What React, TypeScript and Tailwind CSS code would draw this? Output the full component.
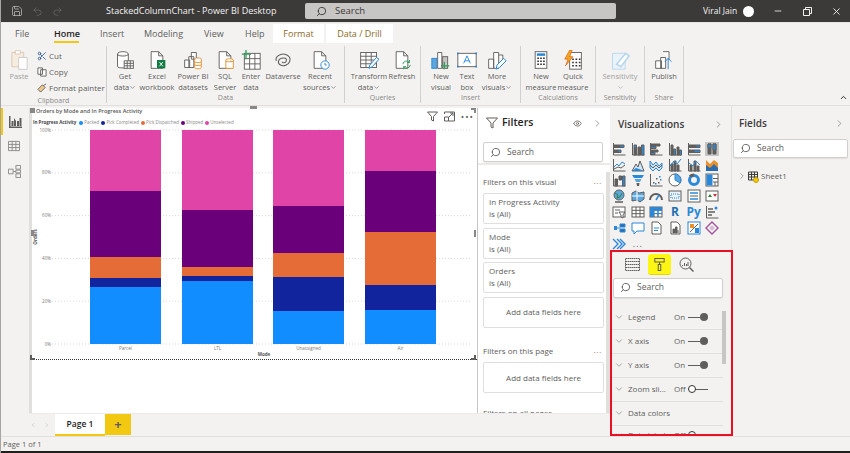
import { ChevronDown, ChevronRight, ChevronUp, Eye, Minus, Redo2, Save, Scissors, Search, Undo2, X } from "lucide-react";
import type { ReactNode } from "react";

const G = "#605e5c";
const B = "#2b88d8";
const O = "#e8912d";

const bars = [
  { label: "Parcel", x: 58, stops: [61, 66, 21, 9, 57] },
  { label: "LTL", x: 150, stops: [80, 57, 9, 5, 63] },
  { label: "Unassigned", x: 241, stops: [76, 47, 24, 34, 33] },
  { label: "Air", x: 333, stops: [41, 61, 53, 25, 34] },
];
const barColors = ["#e044a7", "#6b007b", "#e66c37", "#12239e", "#118dff"];

const legend = [
  ["Packed", "#118dff"],
  ["Pick Completed", "#12239e"],
  ["Pick Dispatched", "#e66c37"],
  ["Shipped", "#6b007b"],
  ["Unselected", "#e044a7"],
];

function Ico({ children, s = 20, vb = 24 }: { children: ReactNode; s?: number; vb?: number }) {
  return (
    <svg width={s} height={s} viewBox={`0 0 ${vb} ${vb}`} fill="none" stroke={G} strokeWidth="1.100" className="shrink-0">
      {children}
    </svg>
  );
}

const Doc = () => <path d="M5 2h9l5 5v15H5z M14 2v5h5" fill="#fff" />;
const Grid = ({ x, y, w = 12, h = 9, c = 3, r = 3 }: { x: number; y: number; w?: number; h?: number; c?: number; r?: number }) => (
  <g>
    <rect x={x} y={y} width={w} height={h} fill="#fff" />
    {Array.from({ length: c - 1 }).map((_, i) => (
      <path key={i} d={`M${x + ((i + 1) * w) / c} ${y}v${h}`} />
    ))}
    {Array.from({ length: r - 1 }).map((_, i) => (
      <path key={i} d={`M${x} ${y + ((i + 1) * h) / r}h${w}`} />
    ))}
  </g>
);

const ribbonIcons: Record<string, ReactNode> = {
  get: (
    <Ico>
      <path d="M3 5c0-4 13-4 13 0v15c0 2-13 2-13 0z M3 5c0 3 13 3 13 0" fill="#fff" />
      <Grid x={11} y={13} w={11} h={9} />
    </Ico>
  ),
  excel: (
    <Ico>
      <Doc />
      <rect x="12" y="12" width="10" height="10" fill="#107c41" stroke="none" />
      <path d="M15 14.500l4 5M19 14.500l-4 5" stroke="#fff" />
    </Ico>
  ),
  pbi: (
    <Ico>
      <path d="M2 12h6v9H2z M7 8h6v13H7z M10 3h6v8H10z" fill="#fff" />
      <path d="M14 11c0-2 8-2 8 0v10c0 2-8 2-8 0z M14 14c0 1.500 8 1.500 8 0M14 17.500c0 1.500 8 1.500 8 0" stroke={O} fill="#fff" />
    </Ico>
  ),
  sql: (
    <Ico>
      <Doc />
      <path d="M13 12c0-2 9-2 9 0v10h-9z M13 13c0 1.500 9 1.500 9 0" stroke={O} fill="#fff" />
    </Ico>
  ),
  enter: (
    <Ico>
      <Grid x={4} y={4} w={19} h={19} c={3} r={3} />
      <path d="M6 0v11M1 5h11" stroke="#2e9e5b" strokeWidth="1.600" />
    </Ico>
  ),
  dataverse: (
    <Ico>
      <path d="M4 13c-2-5 5-9 10-8s8 5 6 9-7 6-11 4-3-7 1-8 7 0 6 3-5 3-5 1" strokeWidth="1.300" />
    </Ico>
  ),
  recent: (
    <Ico>
      <Doc />
      <circle cx="18" cy="18" r="5" fill="#fff" stroke={B} />
      <path d="M18 15.500V18h2" stroke={B} />
    </Ico>
  ),
  transform: (
    <Ico>
      <Grid x={2} y={3} w={19} h={18} c={3} r={4} />
      <path d="M12 22l1-4 8-9 3 2-8 9z" stroke={B} fill="#fff" strokeWidth="1.200" />
    </Ico>
  ),
  refresh: (
    <Ico>
      <Doc />
      <path d="M13 17a4.500 4.500 0 0 1 8-2M22 18a4.500 4.500 0 0 1-8 2M21 12v3h-3M14 23v-3h3" stroke="#2e9e5b" />
    </Ico>
  ),
  newVisual: (
    <Ico>
      <rect x="1" y="10" width="6" height="12" fill="#5ba7e0" stroke={B} />
      <path d="M8 3h5v19H8z" fill="#fff" />
      <rect x="14" y="8" width="6" height="14" fill="#c8c6c4" />
      <path d="M16 14v9M12 19h10" stroke="#2e9e5b" strokeWidth="1.500" />
    </Ico>
  ),
  textBox: (
    <Ico>
      <rect x="1" y="4" width="22" height="16" fill="#fff" stroke={G} />
      <path d="M8 16l4-9 4 9M9.500 13h5" stroke={B} />
      <path d="M0 3h2v2H0zM22 3h2v2h-2zM0 19h2v2H0zM22 19h2v2h-2z" fill={B} stroke="none" />
    </Ico>
  ),
  more: (
    <Ico>
      <path d="M2 11h6v11H2z M8 3h6v19H8z M14 6h5v7" fill="#fff" />
      <path d="M11 23l1-5 8-8 3 3-8 8z" stroke={B} fill="#fff" strokeWidth="1.200" />
    </Ico>
  ),
  measure: (
    <Ico>
      <rect x="5" y="2" width="14" height="20" fill="#fff" />
      <rect x="7" y="4" width="10" height="3" fill={B} stroke="none" />
      <path d="M7.500 10h2M11 10h2M14.500 10h2M7.500 13.500h2M11 13.500h2M14.500 13.500h2M7.500 17h2M11 17h2M14.500 17h2" stroke="#323130" strokeWidth="1.800" />
    </Ico>
  ),
  quick: (
    <Ico>
      <rect x="8" y="3" width="14" height="20" fill="#fff" />
      <path d="M11 11h2M15 11h2M19 11h2M11 15h2M15 15h2M19 15h2M11 19h2M15 19h2M19 19h2" stroke="#323130" strokeWidth="1.800" />
      <path d="M8 0l-6 11h4l-3 8 9-11H8l3-8z" fill="#f2a81d" stroke="#d83b01" strokeWidth="0.600" />
    </Ico>
  ),
  sensitivity: (
    <Ico>
      <path d="M3 4h15v19H3z" fill="#eaf3fa" stroke="#b9d6ec" />
      <path d="M8 17l11-13 4 3-10 13z" fill="#fff" stroke="#b9d6ec" strokeWidth="2" />
    </Ico>
  ),
  publish: (
    <Ico>
      <path d="M2 13h7v9H2z M8 9h6v13H8z M11 2h7v10" fill="#fff" />
      <path d="M17 23V10M13 14l4-4 4 4" stroke={B} />
    </Ico>
  ),
};

function RibbonBtn({ w, icon, lines, caret, muted }: { w: number; icon: string; lines: string[]; caret?: boolean; muted?: boolean }) {
  return (
    <div style={{ width: w }} className="flex flex-col items-center shrink-0">
      <div className="h-[22px] flex items-center">{ribbonIcons[icon]}</div>
      <div className={`text-[7.500px] leading-[11px] text-center whitespace-nowrap ${muted ? "text-[#a19f9d]" : "text-[#605e5c]"}`}>
        {lines.map((l, i) => (
          <div key={i} className="flex items-center justify-center h-[11px]">
            {l}
            {caret && i === lines.length - 1 && <ChevronDown size={7} strokeWidth={2} />}
          </div>
        ))}
      </div>
    </div>
  );
}

function Group({ w, label, inner = "justify-center", children }: { w: number; label: string; inner?: string; children: ReactNode }) {
  return (
    <div style={{ width: w }} className="h-full shrink-0 flex flex-col border-r border-[#d2d0ce]">
      <div className={`flex-1 flex pt-[3px] ${inner}`}>{children}</div>
      <div className="text-center text-[7px] leading-[9px] text-[#8a8886] pb-[1px]">{label}</div>
    </div>
  );
}

function VizIcon({ i }: { i: number }) {
  const g = <path d="M1.500 1v12h12" stroke={G} />;
  const icons: ReactNode[] = [
    <>{g}<path d="M2 3h6v2.500H2z" fill={G} /><path d="M8 3h4v2.500H8z" fill={B} /><path d="M2 8h4v2.500H2z" fill={G} /><path d="M6 8h3v2.500H6z" fill={B} /></>,
    <>{g}<path d="M3 6h2.500v7H3z" fill={G} /><path d="M3 3h2.500v3H3z" fill={B} /><path d="M7 5h2.500v8H7z" fill={G} /><path d="M10.500 3h2.500v10h-2.500z" fill={B} /></>,
    <>{g}<path d="M2 2h9v2H2z" fill={G} /><path d="M2 4.500h5v2H2z" fill={B} /><path d="M2 8h7v2H2z" fill={G} /><path d="M2 10.500h4v2H2z" fill={B} /></>,
    <>{g}<path d="M3 3h2v10H3z" fill={G} /><path d="M5.500 7h2v6h-2z" fill={B} /><path d="M9 5h2v8H9z" fill={G} /><path d="M11.500 8h2v5h-2z" fill={B} /></>,
    <>{g}<path d="M2 3h7v2.500H2z" fill={G} /><path d="M9 3h4v2.500H9z" fill={B} /><path d="M2 8h5v2.500H2z" fill={G} /><path d="M7 8h6v2.500H7z" fill={B} /></>,
    <><rect x="0" y="0" width="14" height="14" fill="#c8c6c4" stroke="none" /><path d="M3 2h3v10H3z" fill={G} /><path d="M3 2h3v4H3z" fill={B} /><path d="M8 2h3v10H8z" fill={G} /><path d="M8 2h3v6H8z" fill={B} /></>,
    <>{g}<path d="M2 9l3-3 2 2 3-4 3 2" stroke={B} /><path d="M2 11l4-2 3 1 4-3" stroke={G} /></>,
    <><path d="M1 13l4-7 2 3 2-6 4 10z" fill="#cfe4f5" stroke={G} /><path d="M1 13l4-3 3 1 5 2z" fill={B} stroke="none" /></>,
    <><path d="M1 3l3 4 3-3 3 4 3-3v5l-3 3-3-3-3 3-3-3z" fill="#cfe4f5" stroke={B} /><path d="M1 7l3 3 3-3 3 3 3-3" stroke={G} /></>,
    <>{g}<path d="M3 6h2v7H3zM6 3h2v10H6zM9 7h2v6H9z" fill={G} /><path d="M2 8l4-5 3 3 4-5" stroke={B} /></>,
    <>{g}<path d="M3 7h2v6H3zM7 3h2v10H7zM10 8h2v5h-2z" fill={G} /><path d="M2 5l4 3 3-5 4 4" stroke={B} /></>,
    <><path d="M1 2l4 4 4-4 4 3v7l-4-3-4 3-4-3z" fill={O} stroke="none" /><path d="M1 7l4 3 4-4 4 4v3H1z" fill="#2b6cb0" stroke="none" /></>,
    <>{g}<path d="M3 6h2.500v7H3zM7 3h2.500v4H7z" fill={G} /><path d="M10.500 3h2.500v10h-2.500z" fill={B} /></>,
    <><path d="M1 2h12l-2 3H3z" fill={B} stroke="none" /><path d="M3.500 6h7l-1.500 3H5z" fill="#5ba7e0" stroke="none" /><path d="M5.500 10h3l-.5 3H6z" fill={G} stroke="none" /></>,
    <>{g}<path d="M4 9h1.500v1.500H4zM7 5h1.500v1.500H7zM9 9h1.500v1.500H9z" fill={G} stroke="none" /><path d="M6 10h1.500v1.500H6zM10 3h1.500v1.500H10zM11 6h1.500v1.500H11z" fill={B} stroke="none" /></>,
    <><circle cx="7" cy="7" r="6" fill="#fff" stroke={G} /><path d="M7 7V1a6 6 0 0 1 5 9z" fill="#5ba7e0" stroke={B} /></>,
    <><circle cx="7" cy="7" r="4.500" stroke={B} strokeWidth="3" /><path d="M3 3.500A5 5 0 0 1 7 2" stroke={G} strokeWidth="3" /></>,
    <><rect x="1" y="1" width="12" height="12" fill="#fff" stroke={G} /><rect x="1.500" y="1.500" width="6" height="11" fill={B} stroke="none" /><path d="M8 5.500h5M8 9h5M10 9v4" stroke={G} /></>,
    <><circle cx="7" cy="6" r="5" fill="#5ba7e0" stroke={G} /><path d="M3 4l3 2-1 3 3-1 2-4" stroke="#2e7d32" /><path d="M3 13h8" stroke={G} strokeWidth="1.500" /></>,
    <><path d="M1 4l4-2 3 2 5-1v7l-4 3-3-2-5 1z" fill="#5ba7e0" stroke={G} /><path d="M6 2v10M1 7h12" stroke="#fff" /></>,
    <><path d="M1 11a6 6 0 0 1 12 0" stroke={G} strokeWidth="2" /><path d="M7 11l3-5" stroke={B} strokeWidth="1.500" /></>,
    <><rect x="1" y="2" width="12" height="10" fill="#eaf3fa" stroke={G} /><path d="M3 5h8v4H3z" stroke={B} strokeDasharray="1 1" /></>,
    <><rect x="1" y="1" width="12" height="12" fill="#fff" stroke={G} /><path d="M3 4h8" stroke={B} strokeWidth="1.500" /><path d="M3 7h8" stroke={G} /><path d="M3 10h8" stroke={B} strokeWidth="1.500" /></>,
    <><rect x="1" y="2" width="12" height="10" fill="#fff" stroke={G} /><path d="M3 8l2-3 2 3z" fill="#2e7d32" stroke="none" /><path d="M8 5l2 3 2-3z" fill="#d13438" stroke="none" /></>,
    <><rect x="1" y="2" width="12" height="10" fill="#fff" stroke={G} /><path d="M3 5h5M3 8h3" /><path d="M7 7h6l-2 3v3l-2-1v-2z" fill="#fff" stroke={G} /></>,
    <Grid x={1} y={2} w={12} h={10} c={3} r={3} />,
    <><Grid x={1} y={2} w={12} h={10} c={3} r={3} /><path d="M1 2h12v3H1zM1 2h4v10H1z" fill={B} stroke="none" /><path d="M5 5h8M5 8.500h8M9 5v7" stroke={B} /></>,
    null,
    null,
    <><path d="M1.500 1v12h12" stroke={G} /><path d="M3 4h5M3 7h7M3 10h4" stroke={G} strokeWidth="1.300" /><circle cx="11" cy="3" r="1.500" fill={B} stroke="none" /></>,
    <><path d="M2 5h3v4H2z" fill={B} stroke="none" /><path d="M5 7h3M8 3h5v3H8zM8 8h5v3H8z" stroke={B} fill="#2b6cb0" /></>,
    <path d="M1 2h12v8H6l-3 3v-3H1z" fill="#fff" stroke={B} />,
    <><path d="M3 1h6l3 3v9H3z" fill="#fff" stroke={G} /><path d="M5 7h5M5 9.500h4" stroke={B} /></>,
    <><path d="M3 1h6l3 3v9H3z" fill="#fff" stroke={G} /><path d="M5 12V8h1.500v4zM7.500 12V6H9v6zM10 12V9" fill={G} /></>,
    <><rect x="1" y="1" width="12" height="12" fill="#fff" stroke={B} /><path d="M3 3h4v4H3z" fill={O} stroke="none" /><path d="M8 7h4v5H8z" fill={B} stroke="none" /><path d="M3 11l8-8" stroke={G} /></>,
    <><path d="M7 1l6 6-6 6-6-6z" fill="#fff" stroke="#a4579c" strokeWidth="1.500" /><path d="M7 4l3 3-3 3-3-3z" fill="#d9b8d6" stroke="none" /></>,
    <path d="M1 2l5 5-5 5M5 2l5 5-5 5M8 2l5 5-5 5" stroke={B} strokeWidth="1.400" />,
  ];
  if (i === 27) return <span className="text-[12px] font-bold text-[#1f6fb5] leading-[14px]">R</span>;
  if (i === 28) return <span className="text-[12px] font-bold text-[#2b88d8] leading-[14px]">Py</span>;
  return (
    <svg width="14" height="14" viewBox="0 0 14 14" fill="none" stroke={G} strokeWidth="1">
      {icons[i]}
    </svg>
  );
}

function SearchBox({ className }: { className: string }) {
  return (
    <div className={`flex items-center bg-white border border-[#d2d0ce] rounded-[2px] shadow-[0_1px_1px_rgba(0,0,0,0.08)] ${className}`}>
      <Search size={11} className="text-[#605e5c] -scale-x-100 ml-[6px] mr-[6px]" />
      <span className="text-[8.500px] text-[#605e5c]">Search</span>
    </div>
  );
}

function FilterCard({ name }: { name: string }) {
  return (
    <div className="border border-[#e1dfdd] rounded-[2px] h-[31px] mb-[3.500px] pl-[5px] text-[8px] leading-[12px] text-[#605e5c] pt-[2px]">
      <div>{name}</div>
      <div>is (All)</div>
    </div>
  );
}

function AddFields() {
  return <div className="border border-[#e1dfdd] rounded-[2px] h-[31px] flex items-center justify-center text-[8px] text-[#605e5c]">Add data fields here</div>;
}

function FormatRow({ name, value, on }: { name: string; value?: string; on?: boolean }) {
  return (
    <div className="flex items-center h-[24px] border-b border-[#e1dfdd] text-[8px] text-[#605e5c] pl-[3px]">
      <ChevronDown size={10} strokeWidth={1.2} className="mr-[4px]" />
      <span className="w-[46px] whitespace-nowrap">{name}</span>
      {value && <span className="w-[14px]">{value}</span>}
      {value && (
        <span className="relative w-[20px] h-[1px] bg-[#605e5c]">
          <span className={on ? "absolute right-0 -top-[3.500px] w-[8px] h-[8px] rounded-full bg-[#605e5c]" : "absolute left-0 -top-[3.500px] w-[8px] h-[8px] rounded-full bg-white border border-[#323130]"} />
        </span>
      )}
    </div>
  );
}

export default function App() {
  return (
    <div className="relative w-[850px] h-[453px] overflow-hidden flex flex-col bg-[#f3f2f1] border-l border-[#a8a6a4] font-['Open_Sans',sans-serif]">
      {/* title bar */}
      <div className="h-[22px] bg-[#3b3a39] flex items-center text-[#f3f2f1] shrink-0">
        <Save size={12} strokeWidth={1.3} className="ml-[10px] text-[#d2d0ce]" />
        <Undo2 size={11} strokeWidth={1.2} className="ml-[9px] text-[#797775]" />
        <Redo2 size={11} strokeWidth={1.2} className="ml-[9px] text-[#797775]" />
        <span className="ml-[43px] w-[199px] text-[9px] whitespace-nowrap">StackedColumnChart - Power BI Desktop</span>
        <div className="w-[311px] h-[16px] rounded-[2px] bg-[#c8c6c4] flex items-center text-[#3b3a39]">
          <Search size={11} className="ml-[11px] mr-[8px] -scale-x-100" />
          <span className="text-[9.500px]">Search</span>
        </div>
        <span className="ml-[87px] text-[8.500px]">Viral Jain</span>
        <span className="ml-[6px] w-[11px] h-[11px] rounded-full bg-white" />
        <Minus size={10} className="ml-[19px]" />
        <svg width="9" height="9" viewBox="0 0 9 9" fill="none" stroke="currentColor" className="ml-[20px]">
          <path d="M.5 2.500h6v6h-6zM2.500 2.500v-2h6v6h-2" />
        </svg>
        <X size={11} className="ml-[19px]" />
      </div>

      {/* tabs */}
      <div className="h-[21px] shrink-0 flex items-end text-[9px] text-[#605e5c] border-t border-[#e8e6e4] whitespace-nowrap">
        {[
          ["File", "ml-[14px] w-[12px]"],
          ["Home", "ml-[27px] w-[25px] font-semibold text-[#252423] border-b-2 border-[#f2c811]"],
          ["Insert", "ml-[21px] w-[23px]"],
          ["Modeling", "ml-[21px] w-[39px]"],
          ["View", "ml-[21px] w-[19px]"],
          ["Help", "ml-[22px] w-[18px]"],
        ].map(([t, c]) => (
          <span key={t} className={`h-[19px] leading-[19px] ${c}`}>{t}</span>
        ))}
        <span className="ml-[10px] w-[51px] h-[19px] leading-[19px] text-center bg-white text-[#8a6a1f]">Format</span>
        <span className="ml-[2px] w-[67px] h-[19px] leading-[19px] text-center bg-white text-[#8a6a1f]">Data / Drill</span>
      </div>

      {/* ribbon */}
      <div className="relative h-[63px] shrink-0 flex pt-[3px] pb-[2px] border-b border-[#e1dfdd]">
        <Group w={106} label="Clipboard" inner="justify-start">
          <div className="w-[36px] flex flex-col items-center">
            <svg width="17" height="22" viewBox="0 0 20 26" fill="none" stroke="#d8c4ae">
              <path d="M1 4h14v17H1z" fill="#f7ece0" />
              <path d="M5 2h6v4H5z" fill="#fff" />
              <path d="M9 10h10v14H9z" fill="#fff" stroke="#c8c6c4" />
            </svg>
            <span className="text-[7.500px] leading-[11px] text-[#a19f9d]">Paste</span>
          </div>
          <div className="flex-1 flex flex-col text-[8px] text-[#605e5c] leading-[16px] -mt-[1px]">
            <div className="flex items-center gap-[2px]"><Scissors size={10} className="text-[#2b579a]" />Cut</div>
            <div className="flex items-center gap-[2px]">
              <svg width="10" height="10" viewBox="0 0 11 11" fill="none" stroke={G}><path d="M1 1h5v7H1zM4 3h6v7H4z" fill="#fff" /></svg>
              Copy
            </div>
            <div className="flex items-center gap-[2px] whitespace-nowrap">
              <svg width="10" height="10" viewBox="0 0 11 11" fill="none" stroke={G}><path d="M1 7l5-5 3 3-5 5z" fill="#f2c98c" /><path d="M7 3l3-2" /></svg>
              Format painter
            </div>
          </div>
        </Group>
        <Group w={238} label="Data" inner="justify-start pl-[1px]">
          <RibbonBtn w={34} icon="get" lines={["Get", "data"]} caret />
          <RibbonBtn w={30} icon="excel" lines={["Excel", "workbook"]} />
          <RibbonBtn w={42} icon="pbi" lines={["Power BI", "datasets"]} />
          <RibbonBtn w={22} icon="sql" lines={["SQL", "Server"]} />
          <RibbonBtn w={30} icon="enter" lines={["Enter", "data"]} />
          <RibbonBtn w={34} icon="dataverse" lines={["Dataverse"]} />
          <RibbonBtn w={40} icon="recent" lines={["Recent", "sources"]} caret />
        </Group>
        <Group w={76} label="Queries" inner="justify-start pl-[2px]">
          <RibbonBtn w={44} icon="transform" lines={["Transform", "data"]} caret />
          <RibbonBtn w={22} icon="refresh" lines={["Refresh"]} />
        </Group>
        <Group w={100} label="Insert" inner="justify-start pl-[2px]">
          <RibbonBtn w={36} icon="newVisual" lines={["New", "visual"]} />
          <RibbonBtn w={16} icon="textBox" lines={["Text", "box"]} />
          <RibbonBtn w={44} icon="more" lines={["More", "visuals"]} caret />
        </Group>
        <Group w={75} label="Calculations" inner="justify-start pl-[4px]">
          <RibbonBtn w={32} icon="measure" lines={["New", "measure"]} />
          <RibbonBtn w={32} icon="quick" lines={["Quick", "measure"]} />
        </Group>
        <Group w={49} label="Sensitivity">
          <RibbonBtn w={44} icon="sensitivity" lines={["Sensitivity", ""]} muted caret />
        </Group>
        <Group w={39} label="Share">
          <RibbonBtn w={36} icon="publish" lines={["Publish"]} />
        </Group>
        <ChevronUp size={9} strokeWidth={2.500} className="absolute right-[2px] bottom-[3px] text-[#252423]" />
      </div>

      {/* main */}
      <div className="flex-1 flex min-h-0">
        {/* left nav */}
        <div className="w-[28px] shrink-0 flex flex-col items-center pt-[2px] pr-[2px]">
          <div className="relative w-[26px] h-[27px] flex items-center justify-center border-l-2 border-[#f2c811]">
            <svg width="13" height="13" viewBox="0 0 13 13" fill={G}><path d="M0 1h1.500v10.500H13V13H0zM2.500 6h2v5h-2zM5 3l2 3v5H5zM8 6h2v5H8zM10.500 3h2v8h-2z" /></svg>
          </div>
          <svg width="12" height="12" viewBox="0 0 13 13" fill="none" stroke="#8a8886" className="mt-[5px]"><path d="M.5 1.500h12v10H.5zM.5 4.800h12M.5 8.200h12M4.500 1.500v10M8.500 1.500v10" /></svg>
          <svg width="13" height="13" viewBox="0 0 14 14" fill="none" stroke="#8a8886" className="mt-[13px]"><path d="M.5 4.500h5v5h-5zM8.500.5h5v4h-5zM8.500 5.500h5v3h-5zM8.500 9.500h5v4h-5zM5.500 7h3" /></svg>
        </div>

        <div className="flex flex-col w-[581px] shrink-0">
          <div className="flex-1 flex min-h-0 pt-[2px] bg-[#f3f2f1]">
            {/* report canvas */}
            <div className="relative w-[448px] shrink-0 bg-white border-l-[3px] border-[#e1dfdd]">
              <div className="h-[252px] border-b border-dotted border-[#323130]">
                <div className="pl-[4px] text-[5.500px] leading-[7px] font-semibold text-[#555]">Orders by Mode and In Progress Activity</div>
                <div className="flex items-center h-[9px] mt-[3px] pl-[1px] text-[4.500px] text-[#8a8886] whitespace-nowrap">
                  <span className="font-bold text-[#444] mr-[3px]">In Progress Activity</span>
                  {legend.map(([t, c]) => (
                    <span key={t} className="flex items-center mr-[2px]">
                      <span className="w-[4px] h-[4px] rounded-full mr-[1px]" style={{ backgroundColor: c }} />
                      {t}
                    </span>
                  ))}
                </div>
                <svg width="445" height="232" viewBox="0 0 445 232" className="block">
                  {[0, 20, 40, 60, 80, 100].map((p, i) => {
                    const y = 3 + (i * 214) / 5;
                    return (
                      <g key={p}>
                        <line x1="20" x2="440" y1={y} y2={y} stroke="#c8c6c4" strokeWidth="0.700" strokeDasharray="1 2" />
                        <text x="19" y={y + 1.500} fontSize="4.500" fill="#777" textAnchor="end">{100 - p}%</text>
                      </g>
                    );
                  })}
                  <text x="5" y="110" fontSize="4.500" fill="#555" fontWeight="700" transform="rotate(-90 5 110)" textAnchor="middle">Orders</text>
                  {bars.map((b) => {
                    let y = 3;
                    return (
                      <g key={b.label}>
                        {b.stops.map((h, i) => {
                          const r = <rect key={i} x={b.x} y={y} width="71" height={h} fill={barColors[i]} />;
                          y += h;
                          return r;
                        })}
                        <text x={b.x + 35.500} y="223" fontSize="4.500" fill="#777" textAnchor="middle">{b.label}</text>
                      </g>
                    );
                  })}
                  <text x="232" y="229" fontSize="4.500" fill="#555" fontWeight="700" textAnchor="middle">Mode</text>
                </svg>
              </div>
              {/* selection handles */}
              <span className="absolute left-[-2px] top-0 w-[5px] h-[5px] bg-[#8a8886]" />
              <span className="absolute left-[-1px] top-[122px] w-[3px] h-[6px] bg-[#8a8886]" />
              <span className="absolute left-[-2px] top-[247px] w-[5px] h-[5px] border-l-2 border-b-2 border-[#605e5c]" />
              <span className="absolute left-[218px] top-[-2px] w-[7px] h-[3px] bg-[#8a8886]" />
              <span className="absolute right-[1px] top-0 w-[5px] h-[5px] border-r-2 border-t-2 border-[#8a8886]" />
              <span className="absolute right-[1px] top-[122px] w-[2px] h-[7px] bg-[#8a8886]" />
              <span className="absolute right-[1px] top-[247px] w-[5px] h-[5px] border-r-2 border-b-2 border-[#605e5c]" />
              {/* visual header, over the chart */}
              <div className="absolute top-[3px] right-[3px] flex items-center gap-[6px] bg-white">
                <svg width="11" height="11" viewBox="0 0 11 11" fill="none" stroke={G}><path d="M.5 1h10L6.500 5.500V10l-2-1V5.500z" /></svg>
                <svg width="11" height="11" viewBox="0 0 11 11" fill="none" stroke={G}><path d="M.5 3V1h10v9h-10V6M4 7l5-5M6 2h3v3M.5 6h4v4" /></svg>
                <span className="text-[9px] leading-[9px] text-[#605e5c] tracking-[1px]">•••</span>
              </div>
            </div>
            {/* filters pane */}
            <div className="w-[133px] shrink-0 bg-white border-l border-[#c8c6c4] relative overflow-hidden">
              <div className="h-[57px] border-b-2 border-[#edebe9] px-[5px]">
                <div className="flex items-center h-[30px] pr-[2px]">
                  <svg width="12" height="12" viewBox="0 0 12 12" fill="none" stroke={G} className="ml-[3px]"><path d="M.5 1h11L7 6v5L5 10V6z" /></svg>
                  <span className="ml-[4px] text-[10.500px] font-semibold text-[#252423]">Filters</span>
                  <Eye size={9} className="ml-auto text-[#605e5c]" />
                  <ChevronRight size={11} strokeWidth={1.300} className="ml-[10px] text-[#605e5c]" />
                </div>
                <SearchBox className="w-[120px] h-[20px] mt-[4px]" />
              </div>
              <div className="pl-[5px] pr-[6px]">
                <div className="flex justify-between items-center text-[8px] text-[#605e5c] h-[14px] mt-[10px] mb-[4px] whitespace-nowrap">
                  Filters on this visual <span className="tracking-[1px] text-[7px] mr-[2px]">...</span>
                </div>
                <FilterCard name="In Progress Activity" />
                <FilterCard name="Mode" />
                <FilterCard name="Orders" />
                <AddFields />
                <div className="flex justify-between items-center text-[8px] text-[#605e5c] h-[14px] mt-[16.500px] mb-[4px] whitespace-nowrap">
                  Filters on this page <span className="tracking-[1px] text-[7px] mr-[2px]">...</span>
                </div>
                <AddFields />
                <div className="text-[8px] text-[#605e5c] mt-[14px]">Filters on all pages</div>
              </div>
              <div className="absolute right-0 top-[64px] bottom-0 w-[4px] bg-[#e1dfdd]" />
            </div>
          </div>
          {/* page tabs */}
          <div className="h-[23px] shrink-0 flex items-stretch bg-[#f3f2f1] border-t border-[#edebe9]">
            <div className="w-[26px] flex items-center gap-[8px] pl-[1px] text-[#c8c6c4]">
              <ChevronRight size={6} strokeWidth={3} className="rotate-180" />
              <ChevronRight size={6} strokeWidth={3} />
            </div>
            <div className="w-[50px] bg-white border-b-2 border-[#f2c811] flex items-center justify-center text-[8.500px] font-semibold text-[#252423]">Page 1</div>
            <div className="w-[26px] mb-[1px] bg-[#f2c811] flex items-center justify-center text-[#605e5c] text-[13px] font-bold leading-none">+</div>
          </div>
        </div>

        {/* visualizations */}
        <div className="w-[121px] shrink-0 pt-[2px] overflow-hidden">
          <div className="flex items-center justify-between h-[33px] pl-[8px] pr-[7px]">
            <span className="text-[10px] font-semibold text-[#3b3a39]">Visualizations</span>
            <ChevronRight size={11} strokeWidth={1.300} className="text-[#605e5c]" />
          </div>
          <div className="grid grid-cols-[repeat(6,18.600px)] auto-rows-[15.800px] items-center justify-items-center">
            {Array.from({ length: 37 }).map((_, i) => <VizIcon key={i} i={i} />)}
            <span className="text-[9px] leading-[9px] text-[#605e5c] tracking-[1px]">...</span>
          </div>
          <div className="flex items-center h-[22px] mt-[2px] pl-[15px] gap-[8px]">
            <svg width="15" height="13" viewBox="0 0 15 13" fill="none" stroke={G}><path d="M.5.500h14v12H.5zM.5 3.500h14M.5 6.500h14M.5 9.500h14" strokeDasharray="1.500 0.500" /></svg>
            <div className="w-[23px] h-[21px] rounded-[3px] bg-[#fdf514] border-b border-[#e0d800] flex items-center justify-center">
              <svg width="11" height="15" viewBox="0 0 13 16" fill="none" stroke={G} strokeWidth="1.200"><path d="M1 1h11v4H1zM6.500 5v3M5 8h3v7H5z" /></svg>
            </div>
            <svg width="15" height="15" viewBox="0 0 15 15" fill="none" stroke={G}><circle cx="6.500" cy="6.500" r="5.500" /><path d="M10.500 10.500l4 4" strokeWidth="1.500" /><path d="M3.500 8v1M5.500 6v3M7.500 7v2M9 5v4" /></svg>
          </div>
          <div className="pl-[3px] pr-[8px] mt-[2px]">
            <SearchBox className="w-[110px] h-[20px]" />
          </div>
          <div className="relative mt-[8px] pl-[1px] pr-[8px]">
            <FormatRow name="Legend" value="On" on />
            <FormatRow name="X axis" value="On" on />
            <FormatRow name="Y axis" value="On" on />
            <FormatRow name="Zoom sli..." value="Off" />
            <FormatRow name="Data colors" />
            <div className="-mt-[2px]">
              <FormatRow name="Data labels" value="Off" />
            </div>
            <div className="absolute right-[5px] top-[5px] w-[4px] h-[53px] bg-[#c8c6c4]" />
          </div>
        </div>

        {/* fields */}
        <div className="w-[119px] shrink-0 border-l border-[#e1dfdd] pt-[2px] pl-[1px] pr-[2px]">
          <div className="flex items-center justify-between h-[31px] pl-[6px] pr-[3px]">
            <span className="text-[10px] font-semibold text-[#3b3a39]">Fields</span>
            <ChevronRight size={11} strokeWidth={1.300} className="text-[#605e5c]" />
          </div>
          <SearchBox className="w-[115px] h-[19px]" />
          <div className="flex items-center mt-[12px] pl-[4px] text-[8px] text-[#605e5c]">
            <ChevronRight size={10} strokeWidth={1.200} />
            <span className="relative ml-[1px] mr-[3px]">
              <svg width="10" height="10" viewBox="0 0 10 10" fill="none" stroke="#3b3a39"><path d="M.5 1h9v8h-9zM.5 3.500h9M.5 6h9M3.500 1v8M6.500 1v8" /></svg>
              <span className="absolute -right-[1px] -bottom-[2px] w-[6px] h-[6px] rounded-full bg-[#f2c811] border border-[#c8a000]" />
            </span>
            Sheet1
          </div>
        </div>
      </div>

      {/* status bar */}
      <div className="h-[17px] shrink-0 border-t border-[#e1dfdd] border-b-2 border-b-[#201f1e] text-[7.500px] leading-[14px] text-[#605e5c] pl-[2px]">Page 1 of 1</div>

      {/* red annotation */}
      <div className="absolute left-[609px] top-[250px] w-[123px] h-[186px] border-2 border-[#e81123] pointer-events-none" />
    </div>
  );
}
